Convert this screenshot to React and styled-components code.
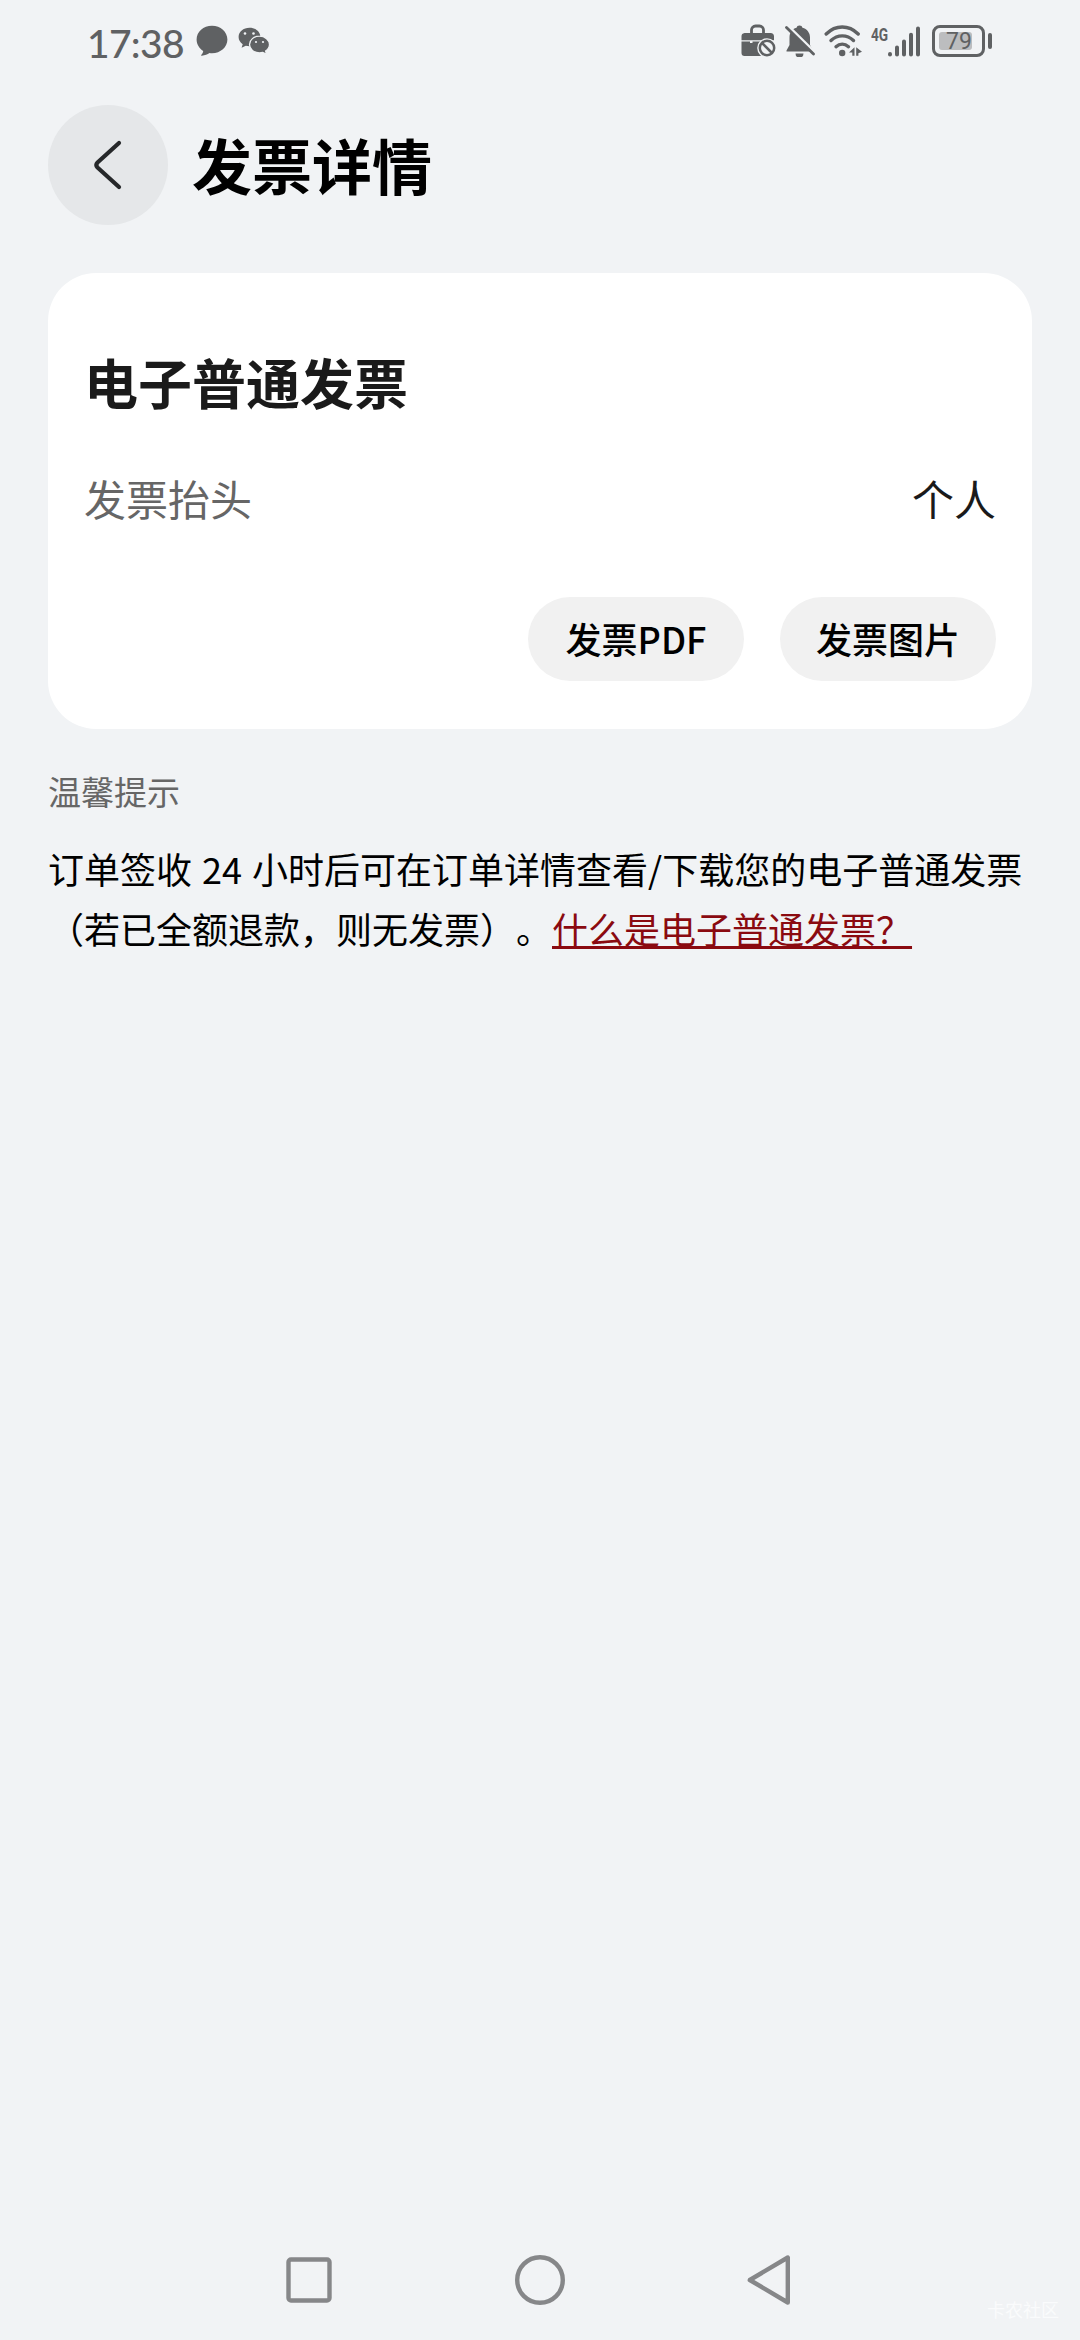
import React from "react";
import styled, { createGlobalStyle } from "styled-components";

const buttons = ["发票PDF", "发票图片"];

const GlobalStyle = createGlobalStyle`
  * {
    box-sizing: border-box;
    margin: 0;
    padding: 0;
  }
  body {
    background: #f1f3f5;
    font-family: "Noto Sans CJK SC", sans-serif;
  }
`;

const ChatIcon = () => (
  <svg width="32" height="32" viewBox="0 0 32 32" fill="#5f6163">
    <path d="M16 .8C7.400.8.6 6.800.6 14.600c0 4.800 2.600 8.900 6.600 11.400-.1 1.500-.8 2.800-1.800 3.700-.5.5-.2 1.200.5 1.100 3-.3 5.600-1.400 7.600-2.700.8.1 1.700.2 2.500.2 8.600 0 15.400-6.100 15.400-13.700S24.600.8 16 .8z" />
  </svg>
);

const WechatIcon = () => (
  <svg width="32" height="28" viewBox="0 0 32 28">
    <path
      fill="#5f6163"
      d="M11.500.8C5.300.8.6 4.800.6 10c0 3 1.600 5.500 4.100 7.200L3.600 20.800l4.200-2.100c1.200.3 2.400.5 3.700.5 6 0 10.900-4.100 10.900-9.200S17.500.8 11.500.8z"
    />
    <path
      fill="#5f6163"
      stroke="#f1f3f5"
      strokeWidth="1.300"
      d="M21.500 9.200c-5.600 0-10 3.700-10 8.300s4.400 8.400 10 8.400c1.200 0 2.300-.2 3.300-.5l3.800 2-1-3.400c2.300-1.500 3.900-3.900 3.900-6.500 0-4.600-4.500-8.300-10-8.300z"
    />
    <g fill="#f1f3f5">
      <circle cx="7" cy="6.500" r="1.300" />
      <circle cx="15.500" cy="6.500" r="1.300" />
      <circle cx="18" cy="15" r="1.100" />
      <circle cx="25" cy="15" r="1.100" />
    </g>
  </svg>
);

const BriefcaseIcon = () => (
  <svg width="35" height="34" viewBox="0 0 35 34">
    <path d="M10.500 9V6a4 4 0 0 1 4-4h4a4 4 0 0 1 4 4v3" fill="none" stroke="#5f6163" strokeWidth="2.800" />
    <path
      fill="#5f6163"
      d="M3.500 9h26a3.500 3.500 0 0 1 3.500 3.500v3.700H.5v-3.700A3.500 3.500 0 0 1 3.500 9zM.5 17.500H9v1.500h2.500v-1.500h10V32H3.500a3 3 0 0 1-3-3z"
    />
    <circle cx="26" cy="24" r="9.800" fill="#f1f3f5" />
    <circle cx="26" cy="24" r="7.200" fill="none" stroke="#5f6163" strokeWidth="2.500" />
    <path d="M21 19l10 10" stroke="#5f6163" strokeWidth="2.500" />
  </svg>
);

const BellOffIcon = () => (
  <svg width="30" height="32" viewBox="0 0 30 32">
    <path
      fill="#5f6163"
      d="M14.500.5a3 3 0 0 1 3 2.300c4.500 1.200 7.500 5 7.500 9.700v7.500l3 5.500v1H1.500v-1L4.500 20v-7.500c0-4.700 2.700-8.500 7-9.700a3 3 0 0 1 3-2.300zM10.500 28.500h8a4 4 0 0 1-8 0z"
    />
    <path d="M2.500 .5l28.500 28" stroke="#f1f3f5" strokeWidth="3" />
    <path d="M1.500 2.500l27 26.500" stroke="#5f6163" strokeWidth="2.800" strokeLinecap="round" />
  </svg>
);

const WifiIcon = () => (
  <svg width="38" height="32" viewBox="0 0 38 32">
    <g fill="none" stroke="#5f6163" strokeWidth="3.400" strokeLinecap="round">
      <path d="M2.200 9c9.500-9.300 22.500-9.300 32 0" />
      <path d="M7 15.500c6.500-6.200 16-6.200 22.500 0" />
      <path d="M12 21.700c3.800-3.400 8.700-3.400 12.500 0" />
    </g>
    <circle cx="18.200" cy="28" r="3.200" fill="#5f6163" />
    <path fill="#5f6163" d="M30.500 22.200v8.600h-2.200v-3.300h-3.300zM32.200 22.200l5.800 4.500-3.600 1.600v2.500h-2.200z" />
  </svg>
);

const SignalIcon = () => (
  <svg width="34" height="31" viewBox="0 0 34 31" stroke="#5f6163" strokeWidth="4" strokeLinecap="round">
    <path d="M3 28v.6M10 21.500v7.100M17 15.500v13.100M24 8.800v19.800M31 2.500v26.100" />
  </svg>
);

const BackIcon = () => (
  <svg width="30" height="52" viewBox="0 0 30 52">
    <path
      d="M26 4L4.500 23.500q-2.500 2.500 0 5L26 48"
      fill="none"
      stroke="#26282a"
      strokeWidth="4.200"
      strokeLinecap="round"
      strokeLinejoin="round"
    />
  </svg>
);

const App = () => {
  return (
    <Page>
      <GlobalStyle />
      <StatusBar>
        <StatusGroup>
          <Time>17:38</Time>
          <ChatIcon />
          <WechatIcon />
        </StatusGroup>
        <StatusIcons>
          <BriefcaseIcon />
          <BellOffIcon />
          <WifiIcon />
          <Mobile>
            <Network>4G</Network>
            <SignalIcon />
          </Mobile>
          <Battery>
            <BatteryBody>
              <BatteryLevel>79</BatteryLevel>
            </BatteryBody>
            <BatteryTip />
          </Battery>
        </StatusIcons>
      </StatusBar>
      <Header>
        <BackButton>
          <BackIcon />
        </BackButton>
        <h1>发票详情</h1>
      </Header>
      <Card>
        <h2>电子普通发票</h2>
        <Row>
          <Label>发票抬头</Label>
          <Value>个人</Value>
        </Row>
        <Actions>
          {buttons.map((x) => (
            <Button key={x}>{x}</Button>
          ))}
        </Actions>
      </Card>
      <Tips>
        <h3>温馨提示</h3>
        <p>
          订单签收 24 小时后可在订单详情查看/下载您的电子普通发票
          <br />
          （若已全额退款，则无发票）。<TipLink>什么是电子普通发票？</TipLink>
        </p>
      </Tips>
      <NavBar>
        <svg width="50" height="54" viewBox="0 0 50 54">
          <rect x="4.500" y="6.500" width="41" height="41" rx="2.500" />
        </svg>
        <svg width="50" height="54" viewBox="0 0 50 54">
          <circle cx="25" cy="27" r="22.800" />
        </svg>
        <svg width="50" height="54" viewBox="0 0 50 54">
          <path d="M41.800 4.500v45L3.800 27z" />
        </svg>
        <Watermark>卡农社区</Watermark>
      </NavBar>
    </Page>
  );
};

const Page = styled.div`
  display: flex;
  flex-direction: column;
  width: 1080px;
  height: 2340px;
  overflow: hidden;
  background: #f1f3f5;
`;
const StatusBar = styled.div`
  display: flex;
  justify-content: space-between;
  height: 105px;
  padding: 21px 88px 0 87px;
  color: #5f6163;
`;
const StatusGroup = styled.div`
  display: flex;
  align-items: center;
  height: 40px;
  gap: 10px;
`;
const Time = styled.span`
  width: 99px;
  padding-top: 3px;
  font: 500 39px/40px "Lato", sans-serif;
  letter-spacing: -0.7px;
  white-space: nowrap;
`;
const StatusIcons = styled.div`
  display: flex;
  align-items: center;
  height: 40px;
  gap: 9px;
`;
const Mobile = styled.div`
  display: flex;
  align-items: center;
  margin-right: 2px;
`;
const Network = styled.span`
  align-self: flex-start;
  width: 16px;
  font: 700 18px/18px "Roboto", sans-serif;
  transform: scaleX(0.76);
  transform-origin: left;
`;
const Battery = styled.div`
  display: flex;
  align-items: center;
  gap: 3px;
`;
const BatteryBody = styled.div`
  width: 53px;
  height: 32px;
  padding: 4px;
  border: 3px solid #5f6163;
  border-radius: 8px;
`;
const BatteryLevel = styled.div`
  width: 33px;
  height: 18px;
  border-radius: 3px;
  background: #bcbdbf;
  font: 400 23px/19px "Roboto", sans-serif;
  padding-left: 7px;
`;
const BatteryTip = styled.div`
  width: 4px;
  height: 16px;
  border-radius: 2px;
  background: #5f6163;
`;
const Header = styled.div`
  display: flex;
  align-items: center;
  height: 120px;
  padding-left: 48px;
  gap: 24px;
  h1 {
    padding-bottom: 2px;
    font-size: 60px;
    font-weight: 700;
    line-height: 86px;
    color: #000;
  }
`;
const BackButton = styled.div`
  display: flex;
  align-items: center;
  justify-content: center;
  width: 120px;
  height: 120px;
  border-radius: 50%;
  background: #e5e7e9;
`;
const Card = styled.div`
  height: 456px;
  margin: 48px 48px 0;
  padding: 69px 36px 0;
  border-radius: 48px;
  background: #fff;
  h2 {
    font-size: 54px;
    font-weight: 700;
    line-height: 80px;
    color: #1a1a1a;
  }
`;
const Row = styled.div`
  display: flex;
  justify-content: space-between;
  margin-top: 45px;
  font-size: 42px;
  line-height: 62px;
`;
const Label = styled.span`
  color: #666;
`;
const Value = styled.span`
  color: #1a1a1a;
`;
const Actions = styled.div`
  display: flex;
  justify-content: flex-end;
  gap: 36px;
  margin-top: 68px;
`;
const Button = styled.button`
  width: 216px;
  height: 84px;
  padding-bottom: 3px;
  border: none;
  border-radius: 42px;
  background: #f1f1f1;
  font-family: inherit;
  font-size: 36px;
  font-weight: 500;
  color: #000;
`;
const Tips = styled.div`
  padding: 37px 48px 0;
  h3 {
    font-size: 33px;
    font-weight: 400;
    line-height: 50px;
    color: #666;
  }
  p {
    margin-top: 22px;
    font-size: 36px;
    line-height: 60px;
    white-space: nowrap;
    word-spacing: 2px;
    text-spacing-trim: space-all;
    color: #000;
  }
`;
const TipLink = styled.span`
  color: #8a0a10;
  text-decoration: underline;
  text-decoration-thickness: 3px;
  text-decoration-skip-ink: none;
  text-underline-offset: 2px;
`;
const NavBar = styled.div`
  position: relative;
  display: flex;
  align-items: center;
  justify-content: center;
  gap: 181px;
  height: 120px;
  margin-top: auto;
  svg {
    fill: none;
    stroke: #868789;
    stroke-width: 4.4;
    stroke-linejoin: round;
  }
`;
const Watermark = styled.span`
  position: absolute;
  right: 21px;
  bottom: 18px;
  font-size: 18px;
  line-height: 26px;
  color: #fafbfc;
`;

export default App;
